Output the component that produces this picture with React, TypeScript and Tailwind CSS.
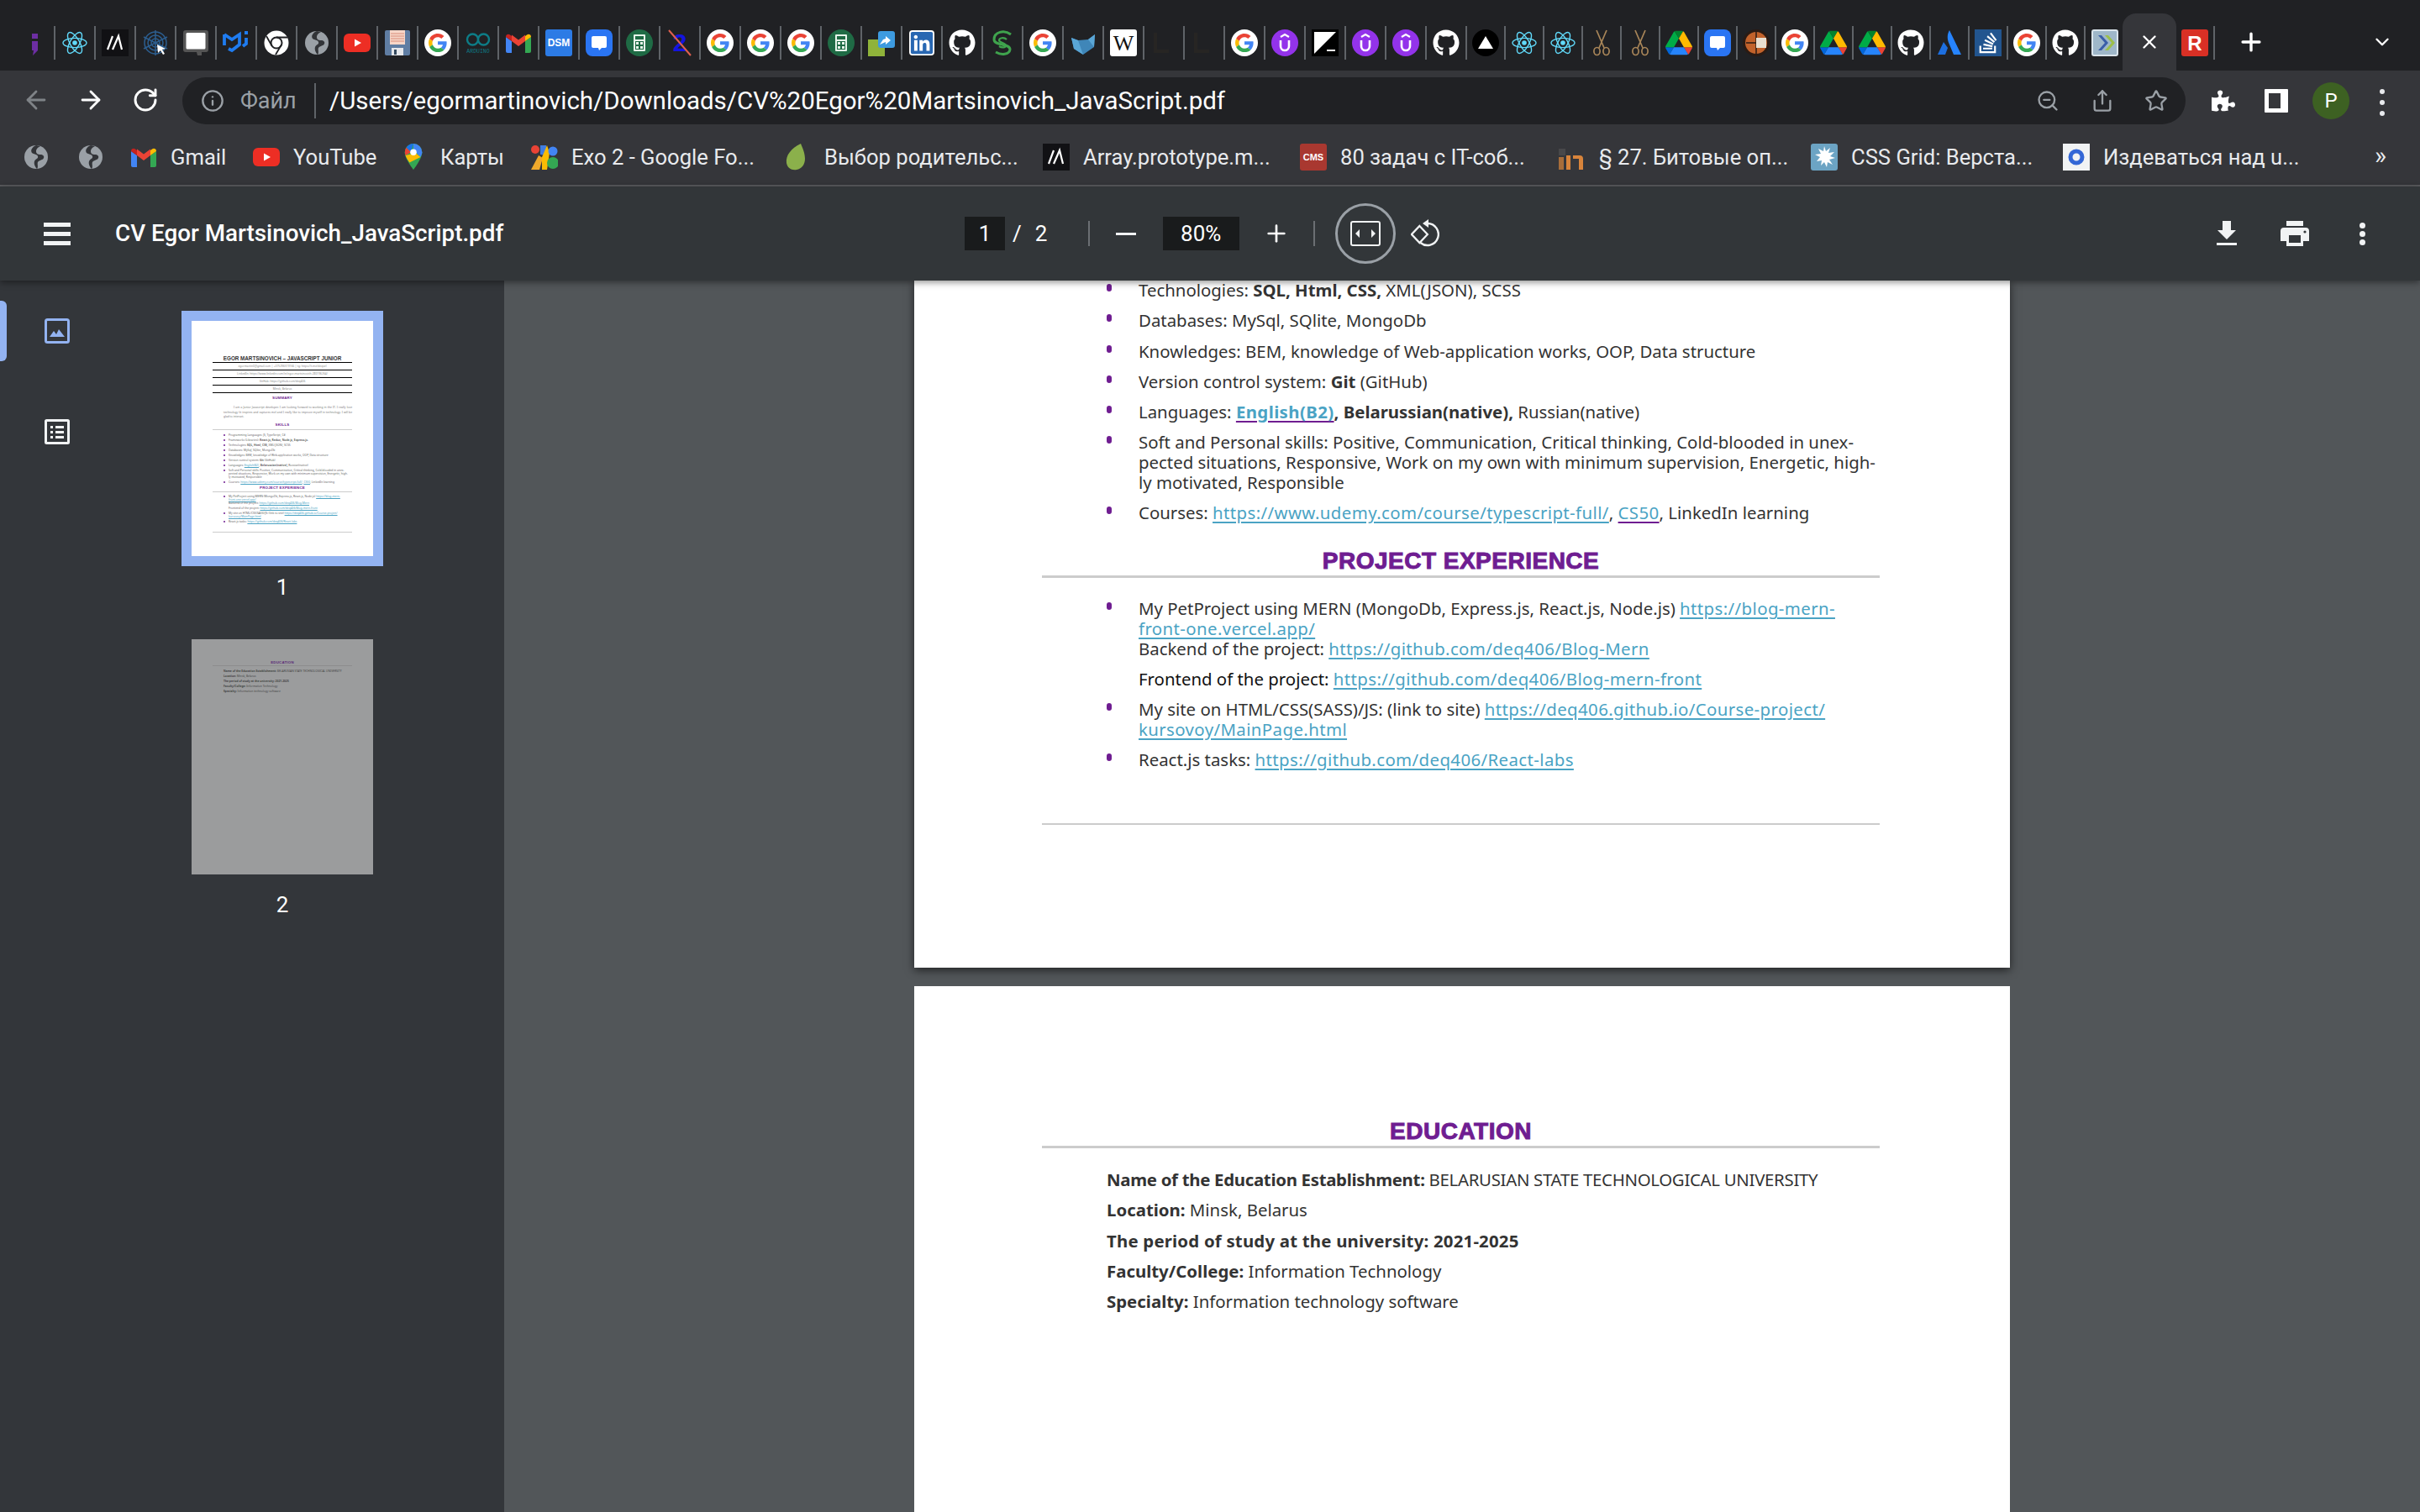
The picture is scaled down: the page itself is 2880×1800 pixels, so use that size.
import React from 'react';
import { FaGithub, FaLinkedin, FaStackOverflow, FaPuzzlePiece } from 'react-icons/fa';
import { ArrowLeft, ArrowRight, RotateCw, Plus, X, ChevronDown, Info, ZoomOut, Share, Star } from 'lucide-react';

/* ---------- favicons ---------- */
const Svg: React.FC<{ children: React.ReactNode; box?: string }> = ({ children, box = '0 0 32 32' }) => (
  <svg viewBox={box} className="w-8 h-8 block">{children}</svg>
);

const Google = () => (
  <Svg box="0 0 48 48">
    <ellipse cx="24" cy="24" rx="24" ry="24" fill="#fff" />
    <g transform="translate(7.5 7.5) scale(.69)">
      <path fill="#EA4335" d="M24 9.5c3.54 0 6.71 1.22 9.21 3.6l6.85-6.85C35.9 2.38 30.47 0 24 0 14.62 0 6.51 5.38 2.56 13.22l7.98 6.19C12.43 13.72 17.74 9.5 24 9.5z" />
      <path fill="#4285F4" d="M46.98 24.55c0-1.57-.15-3.09-.38-4.55H24v9.02h12.94c-.58 2.96-2.26 5.48-4.78 7.18l7.73 6c4.51-4.18 7.09-10.36 7.09-17.65z" />
      <path fill="#FBBC05" d="M10.53 28.59c-.48-1.45-.76-2.99-.76-4.59s.27-3.14.76-4.59l-7.98-6.19C.92 16.46 0 20.12 0 24c0 3.88.92 7.54 2.56 10.78l7.97-6.19z" />
      <path fill="#34A853" d="M24 48c6.48 0 11.93-2.13 15.89-5.81l-7.73-6c-2.15 1.45-4.92 2.3-8.16 2.3-6.26 0-11.57-4.22-13.47-9.91l-7.98 6.19C6.51 42.62 14.62 48 24 48z" />
    </g>
  </Svg>
);

const ReactLogo = () => (
  <Svg>
    <g fill="none" stroke="#61dafb" strokeWidth="1.4">
      <ellipse cx="16" cy="16" rx="14" ry="5.6" />
      <ellipse cx="16" cy="16" rx="14" ry="5.6" transform="rotate(60 16 16)" />
      <ellipse cx="16" cy="16" rx="14" ry="5.6" transform="rotate(120 16 16)" />
    </g>
    <circle cx="16" cy="16" r="2.8" fill="#61dafb" />
  </Svg>
);

const Globe = () => (
  <Svg>
    <circle cx="16" cy="16" r="14" fill="#9aa0a6" />
    <path d="M16 2c-5 2-7 6-5 9 2 2 6 1 7 4 1 3-3 3-4 6-1 3 1 7 3 9 2-2 0-6 1-8 2-3 6-2 7-5 1-2-1-4-4-4-3 0-5-1-5-4 0-3 3-5 5-6z" fill="#202124" opacity=".85" />
  </Svg>
);

const YouTube = () => (
  <Svg>
    <rect x="0" y="5" width="32" height="22" rx="6" fill="#ed2e24" />
    <path d="M13 11.5 21 16l-8 4.5z" fill="#fff" />
  </Svg>
);

const Gmail = () => (
  <Svg>
    <path d="M1 9v17a2 2 0 0 0 2 2h5V14z" fill="#4285f4" />
    <path d="M31 9v17a2 2 0 0 1-2 2h-5V14z" fill="#34a853" />
    <path d="M8 14 16 20 24 14V6.5l-8 6-8-6z" fill="#ea4335" />
    <path d="M1 9c0-3 3-4 5-2.500L8 8v6z" fill="#c5221f" />
    <path d="M31 9c0-3-3-4-5-2.500L24 8v6z" fill="#fbbc04" />
  </Svg>
);

const Drive = () => (
  <Svg box="0 0 87.3 78">
    <path d="m6.6 66.85 3.85 6.65c.8 1.4 1.95 2.5 3.3 3.3l13.75-23.8h-27.5c0 1.55.4 3.1 1.2 4.5z" fill="#0066da" />
    <path d="m43.65 25-13.75-23.8c-1.35.8-2.5 1.9-3.3 3.3l-25.4 44a9.06 9.06 0 0 0 -1.2 4.5h27.5z" fill="#00ac47" />
    <path d="m73.55 76.8c1.35-.8 2.5-1.9 3.3-3.3l1.6-2.75 7.65-13.25c.8-1.4 1.2-2.95 1.2-4.5h-27.502l5.852 11.5z" fill="#ea4335" />
    <path d="m43.65 25 13.75-23.8c-1.35-.8-2.9-1.2-4.5-1.2h-18.5c-1.6 0-3.15.45-4.5 1.2z" fill="#00832d" />
    <path d="m59.8 53h-32.3l-13.75 23.8c1.35.8 2.9 1.2 4.5 1.2h50.8c1.6 0 3.15-.45 4.5-1.2z" fill="#2684fc" />
    <path d="m73.4 26.5-12.7-22c-.8-1.4-1.95-2.5-3.3-3.3l-13.75 23.8 16.15 28h27.45c0-1.55-.4-3.1-1.2-4.5z" fill="#ffba00" />
  </Svg>
);

const Chat = () => (
  <Svg>
    <rect width="32" height="32" rx="8" fill="#2a75f3" />
    <path d="M9 8h14a2 2 0 0 1 2 2v10a2 2 0 0 1-2 2h-4l-3 3-1-3H9a2 2 0 0 1-2-2V10a2 2 0 0 1 2-2z" fill="#fff" />
  </Svg>
);

const Sheets = () => (
  <Svg>
    <circle cx="16" cy="16" r="16" fill="#1f6b45" />
    <rect x="9" y="6" width="14" height="20" rx="1" fill="#e6f4ea" />
    <path d="M11 14h10v10H11z M11 8h10v4H11z" fill="#1f6b45" />
    <path d="M12 15h3v3h-3zM17 15h3v3h-3zM12 20h3v3h-3zM17 20h3v3h-3z" fill="#e6f4ea" />
  </Svg>
);

const Udemy = () => (
  <Svg>
    <circle cx="16" cy="16" r="16" fill="#9333ea" />
    <path d="M11 9l5-3 5 3" fill="none" stroke="#fff" strokeWidth="2.2" />
    <path d="M11 13v7a5 5 0 0 0 10 0v-7" fill="none" stroke="#fff" strokeWidth="2.6" />
  </Svg>
);

const Github = () => <FaGithub className="w-8 h-8 text-white" />;

const Chrome = () => (
  <Svg>
    <circle cx="16" cy="16" r="14.500" fill="#fff" />
    <circle cx="16" cy="16" r="6.500" fill="none" stroke="#202124" strokeWidth="2" />
    <path d="M16 9.500h13M10.500 19.500 4 8M21.500 19 15 30" stroke="#202124" strokeWidth="1.800" />
  </Svg>
);

const Scissors = () => (
  <Svg>
    <g fill="none" stroke="#a98659" strokeWidth="1.700">
      <path d="M10 1l9 21M22 1l-9 21" />
      <ellipse cx="10.500" cy="26" rx="3.600" ry="4.500" />
      <ellipse cx="21.500" cy="26" rx="3.600" ry="4.500" />
    </g>
  </Svg>
);

const Letter: React.FC<{ t: string; size: number; fill: string; color?: string; serif?: boolean }> = ({ t, size, fill, color = '#fff', serif }) => (
  <Svg>
    <rect width="32" height="32" rx="3" fill={fill} />
    <text x="16" y="16" dy=".36em" textAnchor="middle" fontSize={size} fontWeight={serif ? 400 : 700} fill={color} fontFamily={serif ? 'Liberation Serif, serif' : 'Liberation Sans, sans-serif'}>{t}</text>
  </Svg>
);

const Jspell = () => (
  <Svg>
    <rect x="13" y="5" width="7" height="6" fill="#6d2ea3" />
    <path d="M13 14h7v11l-6 6 1-6h-2z" fill="#6d2ea3" />
  </Svg>
);
const Mdn = () => (
  <Svg>
    <rect width="32" height="32" fill="#111114" />
    <path d="M7 24 13 8M13 24 20 8 24 24" fill="none" stroke="#fff" strokeWidth="2.200" />
  </Svg>
);
const Spider = () => (
  <Svg>
    <g fill="none" stroke="#2c5e8f" strokeWidth="1.500">
      <path d="M16 1v30M2 9l28 14M30 9 2 23" />
      <circle cx="16" cy="16" r="5" />
      <circle cx="16" cy="16" r="9" />
      <circle cx="16" cy="16" r="13" />
    </g>
    <path d="M18 18l10 5-4 1 3 5-2 1-3-5-3 3z" fill="#fff" />
  </Svg>
);
const Notice = () => (
  <Svg>
    <path d="M4 1h24a3 3 0 0 1 3 3v20a3 3 0 0 1-3 3h-5v4h-5l-1-4H4a3 3 0 0 1-3-3V4a3 3 0 0 1 3-3z" fill="#555" />
    <path d="M6 4h20a1.500 1.500 0 0 1 1.500 1.500V22a1.500 1.500 0 0 1-1.500 1.500H6A1.500 1.500 0 0 1 4.500 22V5.500A1.500 1.500 0 0 1 6 4z" fill="#fff" />
  </Svg>
);
const Mui = () => (
  <Svg>
    <path d="M2 6V19M2 6 11 12 20 6V18L11 25 7 23M28 10V17L24 20" fill="none" stroke="#1f7cf0" strokeWidth="3.800" />
    <rect x="26" y="2" width="4" height="4" fill="#1f7cf0" />
  </Svg>
);
const Floppy = () => (
  <Svg>
    <rect x="1" y="1" width="30" height="30" rx="2" fill="#5f7da3" />
    <rect x="7" y="1" width="18" height="17" fill="#f6d6c8" />
    <path d="M8 5h16M8 8h16M8 11h16M8 14h16" stroke="#d98c78" strokeWidth="1" />
    <rect x="9" y="22" width="14" height="9" fill="#e5e7eb" />
    <rect x="12" y="24" width="3" height="6" fill="#34495e" />
  </Svg>
);
const Arduino = () => (
  <Svg>
    <g fill="none" stroke="#0d7c86" strokeWidth="2.400">
      <circle cx="9.500" cy="12" r="6.500" />
      <circle cx="22.500" cy="12" r="6.500" />
    </g>
    <text x="16" y="28" textAnchor="middle" fontSize="6.500" fill="#0d7c86" fontFamily="Liberation Mono, monospace">ARDUINO</text>
  </Svg>
);
const XTwo = () => (
  <Svg>
    <text x="16" y="26" textAnchor="middle" fontSize="30" fontWeight="700" fill="#1414e0" fontFamily="Liberation Sans, sans-serif">2</text>
    <path d="M3 1l26 30" stroke="#e0604f" strokeWidth="2" />
  </Svg>
);
const Squoosh = () => (
  <Svg>
    <rect x="0" y="12" width="20" height="20" fill="#8fb33a" />
    <rect x="12" y="2" width="20" height="20" rx="3" fill="#3d9be0" />
    <path d="M14 18l4-6 3-1v-3l6 5-6 5v-3z" fill="#fff" />
  </Svg>
);
const Linked = () => <FaLinkedin className="w-[30px] h-[30px] text-[#2867b2] bg-white rounded-sm" />;
const Swirl = () => (
  <Svg>
    <path d="M26 6C18 0 6 3 6 12c0 8 19 4 19 12-1 6-10 7-17 3" fill="none" stroke="#3fa34d" strokeWidth="3" />
    <path d="M21 12c-3-3-9-2-9 1 0 3 8 3 8 6 0 3-5 3-8 1" fill="none" stroke="#3fa34d" strokeWidth="2.200" />
  </Svg>
);
const Fox = () => (
  <Svg>
    <path d="M2 10l8 3L22 12l8-6-1 15-13 9-11-7z" fill="#3f86b8" />
    <path d="M2 10l8 3 6 17-11-7zM22 12l8-6-1 15z" fill="#5aa6d6" />
  </Svg>
);
const Terminal = () => (
  <Svg>
    <rect width="32" height="32" fill="#000" />
    <path d="M3 3h26L3 29z" fill="#fff" />
    <rect x="18" y="24" width="10" height="2" fill="#fff" />
  </Svg>
);
const Vercel = () => (
  <Svg>
    <circle cx="16" cy="16" r="16" fill="#000" />
    <path d="M16 8l9 15H7z" fill="#fff" />
  </Svg>
);
const Ball = () => (
  <Svg>
    <circle cx="16" cy="16" r="16" fill="#2a1b14" />
    <circle cx="16" cy="16" r="13" fill="#c2622b" />
    <path d="M4 16h24M16 3v26" stroke="#2a1b14" strokeWidth="1.500" />
    <rect x="16" y="10" width="12" height="12" fill="#e9dfd0" />
  </Svg>
);
const Atlassian = () => (
  <Svg>
    <path d="M16 1c-3 5-3 11 0 17l5 12h9z" fill="#2684ff" />
    <path d="M9 15 2 30h9l3-8z" fill="#1d6fe0" />
  </Svg>
);
const Stack = () => (
  <div className="w-8 h-8 bg-[#22558f] flex items-center justify-center">
    <FaStackOverflow className="w-7 h-7 text-white" />
  </div>
);
const Arrows = () => (
  <Svg>
    <rect x="1" y="1" width="30" height="30" rx="2" fill="#9fb7c9" stroke="#dbe5ec" strokeWidth="2" />
    <path d="M8 7l8 9-8 9h4l8-9-8-9z" fill="#3b5ea8" />
    <path d="M16 7l8 9-8 9h4l8-9-8-9z" fill="#9cbf4a" />
  </Svg>
);
const Blank = () => (
  <Svg>
    <path d="M4 4h4v20h14v4H4z" fill="#272523" />
  </Svg>
);

const Pin = () => (
  <Svg box="0 0 24 34">
    <path d="M12 0A11 11 0 0 0 1 11c0 8 11 22 11 22s11-14 11-22A11 11 0 0 0 12 0z" fill="#34a853" />
    <path d="M12 0a11 11 0 0 1 11 11c0 2-1 4-2 6L12 8z" fill="#4285f4" />
    <path d="M12 0A11 11 0 0 0 3 5l6 6z" fill="#1a73e8" />
    <path d="M3 5a11 11 0 0 0-1 10l7-4z" fill="#ea4335" />
    <path d="M2 15c1 3 3 6 5 9l14-7-6-5z" fill="#fbbc04" />
    <circle cx="12" cy="11" r="4" fill="#fff" />
  </Svg>
);
const Exo = () => (
  <Svg>
    <path d="M0 31 9 14l5 3-4 14z" fill="#f0a92c" />
    <circle cx="5" cy="7" r="5" fill="#ea4335" />
    <path d="M11 2h7v12l-7-1z" fill="#4285f4" opacity=".9" />
    <path d="M13 16l6-14 3 9-3 20h-6z" fill="#fbbc04" />
    <circle cx="26" cy="9" r="5.500" fill="#4285f4" />
    <circle cx="26" cy="23" r="7" fill="#34a853" />
  </Svg>
);
const Leaf = () => (
  <Svg>
    <path d="M20 0C8 6 2 14 3 23c1 6 6 9 12 8 6-1 10-6 10-13 0-7-3-13-5-18z" fill="#8bb04b" />
  </Svg>
);
const Habr = () => (
  <Svg>
    <rect x="0" y="6" width="8" height="8" fill="#555" opacity=".6" />
    <path d="M9 14h5v17H9zM17 14h8a4 4 0 0 1 4 4v13h-5V18h-7z" fill="#d8843b" />
    <path d="M0 16h6v15H0z" fill="#d8843b" opacity=".7" />
  </Svg>
);
const Splat = () => (
  <Svg>
    <rect width="32" height="32" rx="3" fill="#6ca4c4" />
    <path d="M16 3l2 6 5-4-2 6 7-1-5 5 6 2-7 2 4 6-6-3-1 6-3-6-4 4 1-6-6 1 4-5-6-3 7-1-3-6 6 3z" fill="#fff" />
  </Svg>
);
const RingIcon = () => (
  <Svg>
    <rect width="32" height="32" fill="#f1f3f4" />
    <circle cx="16" cy="16" r="7" fill="none" stroke="#3367d6" strokeWidth="5" />
  </Svg>
);

/* ---------- tab strip ---------- */
const wideTabs = [
  Jspell, ReactLogo, Mdn, Spider, Notice, Mui, Chrome, Globe, YouTube, Floppy, Google, Arduino, Gmail,
  () => <Letter t="DSM" size={12} fill="#2c7be5" />, Chat, Sheets, XTwo, Google, Google, Google, Sheets, Squoosh, Linked, Github, Swirl, Google, Fox,
  () => <Letter t="W" size={26} fill="#fff" color="#111" serif />, Blank, Blank, Google, Udemy, Terminal, Udemy, Udemy, Github,
];
const narrowTabs = [
  Vercel, ReactLogo, ReactLogo, Scissors, Scissors, Drive, Chat, Ball, Google, Drive, Drive, Github, Atlassian, Stack, Google, Github, Arrows,
];

const TabStrip = () => (
  <div className="h-[84px] bg-[#202124] flex items-end pl-[18px] relative shrink-0">
    <div className="flex h-[68px] items-start">
      {wideTabs.map((Icon, i) => (
        <div key={i} className="w-12 h-[40px] mt-[15px] flex items-center justify-center border-r-2 border-[#5f6368] pr-[1px]">
          <Icon />
        </div>
      ))}
      {narrowTabs.map((Icon, i) => (
        <div key={i} className={`w-[46px] h-[40px] mt-[15px] flex items-center justify-center pr-[1px] ${i === narrowTabs.length - 1 ? '' : 'border-r-2 border-[#5f6368]'}`}>
          <Icon />
        </div>
      ))}
    </div>
    <div className="w-16 h-[68px] bg-[#35363a] rounded-t-[16px] flex items-center justify-center -ml-[2px]">
      <X className="w-[26px] h-[26px] text-white" strokeWidth={2.2} />
    </div>
    <div className="w-[46px] h-[40px] mb-[13px] flex items-center justify-center border-r-2 border-[#5f6368]">
      <Letter t="R" size={24} fill="#d93025" />
    </div>
    <Plus className="w-[34px] h-[34px] text-white mb-[17px] ml-[26px]" strokeWidth={2.4} />
    <ChevronDown className="w-[26px] h-[26px] text-white mb-[21px] ml-[126px]" strokeWidth={2.2} />
  </div>
);

/* ---------- toolbar ---------- */
const Toolbar = () => (
  <div className="h-16 bg-[#35363a] flex items-start shrink-0 pt-2 font-['Roboto',sans-serif]">
    <ArrowLeft className="w-[34px] h-[34px] text-[#7f8387] ml-[26px] mt-[10px]" strokeWidth={2} />
    <ArrowRight className="w-[34px] h-[34px] text-white ml-[31px] mt-[10px]" strokeWidth={2} />
    <RotateCw className="w-[32px] h-[32px] text-white ml-[32px] mt-[11px]" strokeWidth={2.2} />
    <div className="ml-[28px] w-[2384px] h-14 rounded-full bg-[#202124] flex items-center">
      <Info className="w-7 h-7 text-[#9aa0a6] ml-[22px]" strokeWidth={2} />
      <span className="text-[27px] text-[#9aa0a6] ml-[19px] w-[90px] border-r-2 border-[#5f6368] leading-[42px]">Файл</span>
      <span className="text-[29.500px] text-white ml-[16px] whitespace-nowrap">/Users/egormartinovich/Downloads/CV%20Egor%20Martsinovich_JavaScript.pdf</span>
      <ZoomOut className="w-7 h-7 text-[#9aa0a6] ml-auto" strokeWidth={2} />
      <Share className="w-7 h-7 text-[#9aa0a6] ml-[37px]" strokeWidth={2} />
      <Star className="w-7 h-7 text-[#9aa0a6] ml-[36px] mr-[21px]" strokeWidth={2} />
    </div>
    <FaPuzzlePiece className="w-7 h-7 text-white ml-[31px] mt-[14px]" />
    <div className="w-7 h-7 border-white border-[5px] border-r-[9px] ml-[35px] mt-[14px] rounded-[1px]" />
    <div className="w-[44px] h-[44px] rounded-full bg-[#3d6122] text-white text-[24px] flex items-center justify-center ml-[29px] mt-[6px]">P</div>
    <div className="flex flex-col gap-[7px] ml-[36px] mt-[14px]">
      <span className="w-[6px] h-[6px] rounded-full bg-[#e8eaed]" />
      <span className="w-[6px] h-[6px] rounded-full bg-[#e8eaed]" />
      <span className="w-[6px] h-[6px] rounded-full bg-[#e8eaed]" />
    </div>
  </div>
);

/* ---------- bookmarks ---------- */
const bookmarks: { icon: React.FC; label: string; width: string }[] = [
  { icon: Gmail, label: 'Gmail', width: 'w-[146px]' },
  { icon: YouTube, label: 'YouTube', width: 'w-[175px]' },
  { icon: Pin, label: 'Карты', width: 'w-[156px]' },
  { icon: Exo, label: 'Exo 2 - Google Fo...', width: 'w-[301px]' },
  { icon: Leaf, label: 'Выбор родительс...', width: 'w-[308px]' },
  { icon: Mdn, label: 'Array.prototype.m...', width: 'w-[306px]' },
  { icon: () => <Letter t="CMS" size={11} fill="#a93830" />, label: '80 задач с IT-соб...', width: 'w-[308px]' },
  { icon: Habr, label: '§ 27. Битовые оп...', width: 'w-[300px]' },
  { icon: Splat, label: 'CSS Grid: Верста...', width: 'w-[300px]' },
  { icon: RingIcon, label: 'Издеваться над u...', width: 'w-[300px]' },
];

const Bookmarks = () => (
  <div className="h-[74px] bg-[#35363a] border-b-2 border-[#5b5c5f] flex items-center shrink-0 font-['Roboto',sans-serif] text-[25.600px] text-[#e8eaed] pt-[6px]">
    <div className="w-[32px] ml-[27px] shrink-0"><Globe /></div>
    <div className="w-[32px] ml-[33px] mr-[31px] shrink-0"><Globe /></div>
    {bookmarks.map(b => (
      <div key={b.label} className={`flex items-center gap-[16px] whitespace-nowrap shrink-0 ${b.width}`}>
        <b.icon />
        <span>{b.label}</span>
      </div>
    ))}
    <span className="ml-[71px] text-[30px] leading-none -mt-[4px]">»</span>
  </div>
);

/* ---------- pdf toolbar ---------- */
const PdfToolbar = () => (
  <div className="h-[112px] bg-[#323639] flex items-center shrink-0 relative z-10 shadow-[0_2px_8px_rgba(0,0,0,0.45)] font-['Roboto',sans-serif] text-white">
    <div className="flex flex-col gap-[6px] ml-[52px]">
      <span className="w-8 h-[5px] bg-[#f1f3f4]" />
      <span className="w-8 h-[5px] bg-[#f1f3f4]" />
      <span className="w-8 h-[5px] bg-[#f1f3f4]" />
    </div>
    <span className="ml-[53px] text-[27.800px] font-medium w-[1011px] whitespace-nowrap">CV Egor Martsinovich_JavaScript.pdf</span>
    <span className="w-12 h-10 bg-[#191b1c] flex items-center justify-center text-[26px]">1</span>
    <span className="text-[26px] ml-[9px]">/</span>
    <span className="text-[26px] ml-[16px] w-[63px]">2</span>
    <span className="w-[2px] h-[30px] bg-[#6b6f73]" />
    <span className="w-6 h-[3px] bg-[#f1f3f4] ml-[31px]" />
    <span className="w-[91px] h-10 bg-[#191b1c] flex items-center justify-center text-[26px] ml-[32px]">80%</span>
    <Plus className="w-[32px] h-[32px] ml-[28px]" strokeWidth={2} />
    <span className="w-[2px] h-[30px] bg-[#6b6f73] ml-[28px]" />
    <div className="w-[72px] h-[72px] rounded-full border-[3px] border-[#9aa0a6] flex items-center justify-center ml-[24px]">
      <svg viewBox="0 0 36 30" className="w-9 h-[30px]">
        <rect x="1" y="1" width="34" height="28" rx="2" fill="none" stroke="#f1f3f4" strokeWidth="2" />
        <path d="M11 10v10l-5-5zM25 10v10l5-5z" fill="#f1f3f4" />
      </svg>
    </div>
    <svg viewBox="0 0 34 36" className="w-[34px] h-9 ml-[18px]">
      <path d="M20 6A13 13 0 1 1 11.500 29" fill="none" stroke="#f1f3f4" strokeWidth="2.400" />
      <path d="M21 1v10l-7-5z" fill="#f1f3f4" />
      <path d="M10 9 20 19 10 29 0 19z" transform="translate(1 0) scale(.94 1)" fill="none" stroke="#f1f3f4" strokeWidth="2.400" />
    </svg>
    <svg viewBox="0 0 24 30" className="w-6 h-[30px] ml-auto">
      <path d="M7 0h10v11h6L12 22 1 11h6zM0 26h24v3H0z" fill="#f1f3f4" />
    </svg>
    <svg viewBox="0 0 34 30" className="w-[34px] h-[30px] ml-[52px]">
      <path d="M7 0h20v6H7zM4 8h26a4 4 0 0 1 4 4v12h-7v6H7v-6H0V12a4 4 0 0 1 4-4z" fill="#f1f3f4" />
      <path d="M10 17h14v9H10z" fill="#323639" />
      <circle cx="29" cy="13" r="1.600" fill="#323639" />
    </svg>
    <div className="flex flex-col gap-[3px] ml-[60px] mr-[65px]">
      <span className="w-[7px] h-[7px] rounded-full bg-[#f1f3f4]" />
      <span className="w-[7px] h-[7px] rounded-full bg-[#f1f3f4]" />
      <span className="w-[7px] h-[7px] rounded-full bg-[#f1f3f4]" />
    </div>
  </div>
);

/* ---------- thumbnails ---------- */
const ThumbItem: React.FC<{ children: React.ReactNode; rowClass: string }> = ({ children, rowClass }) => (
  <div className={`flex items-center pl-[13px] whitespace-nowrap ${rowClass}`}>
    <span className="w-[2px] h-[2px] rounded-full bg-[#6f1d91] mr-[4px] shrink-0" />
    <span>{children}</span>
  </div>
);
const ThumbHead: React.FC<{ children: React.ReactNode; rowClass: string }> = ({ children, rowClass }) => (
  <div className={`flex items-center justify-center font-bold text-[#6f1d91] text-[4.400px] tracking-[0.2px] font-['Liberation_Sans',sans-serif] ${rowClass}`}>{children}</div>
);
const TA: React.FC<{ children: React.ReactNode }> = ({ children }) => <span className="text-[#4aa3c4] underline">{children}</span>;

const ThumbOne = () => (
  <div className="w-[216px] h-[280px] bg-white pt-[41px] px-[25px] font-['Noto_Sans',sans-serif] text-[3.300px] text-[#666] leading-none overflow-hidden">
    <div className="h-[9px] border-b border-black flex items-center justify-center font-bold text-[6.300px] text-[#333] whitespace-nowrap font-['Liberation_Sans',sans-serif]">EGOR MARTSINOVICH – JAVASCRIPT JUNIOR</div>
    <div className="h-[9px] border-b border-black flex items-center justify-center whitespace-nowrap text-[#888]">egormartin0@gmail.com | +375296519166 | tg: https://t.me/deqsel</div>
    <div className="h-[9px] border-b border-black flex items-center justify-center whitespace-nowrap text-[#888]">LinkedIn: https://www.linkedin.com/in/egor-martsinovich-280196264/</div>
    <div className="h-[9px] border-b border-black flex items-center justify-center whitespace-nowrap text-[#888]">GitHub: https://github.com/deq406</div>
    <div className="h-[9px] border-b border-black flex items-center justify-center whitespace-nowrap text-[#888]">Minsk, Belarus</div>
    <ThumbHead rowClass="h-[13px]">SUMMARY</ThumbHead>
    <div className="pl-[13px] text-[#777] leading-[5.500px] mt-[1px] text-justify [text-indent:12px]">I am a Junior Javascript developer. I am looking forward to working in the IT. I really love technology (it inspires and captures me) and I really like to improve myself in technology. I will be glad to interact.</div>
    <ThumbHead rowClass="h-[6px] mt-[5px] mb-[1px]">SKILLS</ThumbHead>
    <div className="h-[1px] bg-[#ccc] mb-[3px]" />
    <ThumbItem rowClass="h-[6px]">Programming Languages: JS, TypeScript, C#</ThumbItem>
    <ThumbItem rowClass="h-[6px]">Frameworks (Libraries): <b>React.js, Redux, Node.js, Express.js.</b></ThumbItem>
    <ThumbItem rowClass="h-[6px]">Technologies: <b>SQL, Html, CSS,</b> XML(JSON), SCSS</ThumbItem>
    <ThumbItem rowClass="h-[6px]">Databases: MySql, SQlite, MongoDb</ThumbItem>
    <ThumbItem rowClass="h-[6px]">Knowledges: BEM, knowledge of Web-application works, OOP, Data structure</ThumbItem>
    <ThumbItem rowClass="h-[6px]">Version control system: <b>Git</b> (GitHub)</ThumbItem>
    <ThumbItem rowClass="h-[6px]">Languages: <TA>English(B2)</TA>, <b>Belarussian(native),</b> Russian(native)</ThumbItem>
    <ThumbItem rowClass="h-[4px] mt-[1px]">Soft and Personal skills: Positive, Communication, Critical thinking, Cold-blooded in unex-</ThumbItem>
    <div className="h-[4px] pl-[19px] flex items-center whitespace-nowrap">pected situations, Responsive, Work on my own with minimum supervision, Energetic, high-</div>
    <div className="h-[4px] pl-[19px] flex items-center whitespace-nowrap">ly motivated, Responsible</div>
    <ThumbItem rowClass="h-[6px] mt-[1px]">Courses: <TA>https://www.udemy.com/course/typescript-full/</TA>, <TA>CS50</TA>, LinkedIn learning</ThumbItem>
    <ThumbHead rowClass="h-[6px] mt-[2px]">PROJECT EXPERIENCE</ThumbHead>
    <div className="h-[1px] bg-[#ccc] mb-[3px]" />
    <ThumbItem rowClass="h-[4px]">My PetProject using MERN (MongoDb, Express.js, React.js, Node.js) <TA>https://blog-mern-</TA></ThumbItem>
    <div className="h-[4px] pl-[19px] flex items-center whitespace-nowrap"><TA>front-one.vercel.app/</TA></div>
    <div className="h-[4px] pl-[19px] flex items-center whitespace-nowrap"><span>Backend of the project: <TA>https://github.com/deq406/Blog-Mern</TA></span></div>
    <div className="h-[6px] mt-[1px] pl-[19px] flex items-center whitespace-nowrap"><span>Frontend of the project: <TA>https://github.com/deq406/Blog-mern-front</TA></span></div>
    <ThumbItem rowClass="h-[4px] mt-[1px]">My site on HTML/CSS(SASS)/JS: (link to site) <TA>https://deq406.github.io/Course-project/</TA></ThumbItem>
    <div className="h-[4px] pl-[19px] flex items-center whitespace-nowrap"><TA>kursovoy/MainPage.html</TA></div>
    <ThumbItem rowClass="h-[6px] mt-[1px]">React.js tasks: <TA>https://github.com/deq406/React-labs</TA></ThumbItem>
    <div className="h-[1px] bg-[#ccc] mt-[9px]" />
  </div>
);

const ThumbTwo = () => (
  <div className="w-[216px] h-[280px] bg-[#9b9c9d] pt-[25px] px-[25px] font-['Noto_Sans',sans-serif] text-[3.300px] text-[#444] leading-none overflow-hidden">
    <ThumbHead rowClass="h-[6px] !text-[#5b2a78]">EDUCATION</ThumbHead>
    <div className="h-[1px] bg-[#8c8c8d] mb-[3px]" />
    <div className="pl-[13px] flex flex-col whitespace-nowrap">
      <div className="h-[6px] flex items-center"><b>Name of the Education Establishment:</b>&nbsp;BELARUSIAN STATE TECHNOLOGICAL UNIVERSITY</div>
      <div className="h-[6px] flex items-center"><b>Location:</b>&nbsp;Minsk, Belarus</div>
      <div className="h-[6px] flex items-center"><b>The period of study at the university: 2021-2025</b></div>
      <div className="h-[6px] flex items-center"><b>Faculty/College:</b>&nbsp;Information Technology</div>
      <div className="h-[6px] flex items-center"><b>Specialty:</b>&nbsp;Information technology software</div>
    </div>
  </div>
);

const Sidebar = () => (
  <aside className="w-[600px] shrink-0 bg-[#33363a] relative font-['Roboto',sans-serif] text-white flex">
    <div className="absolute left-0 top-[24px] w-2 h-[72px] rounded-r-[6px] bg-[#93b3f1]" />
    <div className="w-[136px] shrink-0 flex flex-col items-center pt-[45px] gap-[90px]">
      <svg viewBox="0 0 30 30" className="w-[30px] h-[30px]">
        <rect x="1.500" y="1.500" width="27" height="27" rx="2" fill="none" stroke="#93b3f1" strokeWidth="3" />
        <path d="M6 22l5-7 3 4 3-6 7 9z" fill="#93b3f1" />
      </svg>
      <svg viewBox="0 0 30 30" className="w-[30px] h-[30px]">
        <rect x="1.500" y="1.500" width="27" height="27" rx="1" fill="none" stroke="#f1f3f4" strokeWidth="3" />
        <path d="M7 8h3v3H7zM13 8h10v3H13zM7 14h3v3H7zM13 14h10v3H13zM7 20h3v3H7zM13 20h10v3H13z" fill="#f1f3f4" />
      </svg>
    </div>
    <div className="w-[240px] ml-[80px] flex flex-col items-center pt-[36px]">
      <div className="border-[12px] border-[#93b3f1]"><ThumbOne /></div>
      <span className="text-[26px] leading-[30px] mt-[10px]">1</span>
      <div className="mt-[47px]"><ThumbTwo /></div>
      <span className="text-[26px] leading-[30px] mt-[21px]">2</span>
    </div>
  </aside>
);

/* ---------- pdf pages ---------- */
const A: React.FC<{ children: React.ReactNode; purple?: boolean }> = ({ children, purple }) => (
  <a className={`text-[#4aa3c4] underline underline-offset-[3px] tracking-[0.4px] ${purple ? 'decoration-[#6f1d91]' : 'decoration-[#4aa3c4]'}`}>{children}</a>
);
const Li: React.FC<{ children: React.ReactNode }> = ({ children }) => (
  <li className="flex mb-[12.700px]">
    <span className="w-[6px] h-[9px] rounded-full bg-[#6f1d91] mt-[4px] mr-[32px] shrink-0" />
    <div>{children}</div>
  </li>
);
const Heading: React.FC<{ children: React.ReactNode; className: string }> = ({ children, className }) => (
  <h2 className={`h-[36px] border-b-[3px] border-[#cccccc] text-center font-['Liberation_Sans',sans-serif] font-bold text-[#6f1d91] text-[28px] leading-[32px] [-webkit-text-stroke:1px_#6f1d91] tracking-[0.5px] ${className}`}>{children}</h2>
);

const PdfPages = () => (
  <main className="flex-1 bg-[#525659] flex flex-col items-center">
    <section className="w-[1304px] h-[818px] shrink-0 bg-white pl-[152px] pr-[155px] shadow-[0_3px_10px_rgba(0,0,0,0.6)] font-['Noto_Sans',sans-serif] text-[20.400px] leading-[23.600px] text-[#333] whitespace-nowrap">
      <ul className="pl-[77px]">
        <Li>Technologies: <b>SQL, Html, CSS,</b> XML(JSON), SCSS</Li>
        <Li>Databases: MySql, SQlite, MongoDb</Li>
        <Li>Knowledges: BEM, knowledge of Web-application works, OOP, Data structure</Li>
        <Li>Version control system: <b>Git</b> (GitHub)</Li>
        <Li>Languages: <A purple><b>English(B2)</b></A><b>, Belarussian(native),</b> Russian(native)</Li>
        <Li>
          Soft and Personal skills: Positive, Communication, Critical thinking, Cold-blooded in unex-<br />
          pected situations, Responsive, Work on my own with minimum supervision, Energetic, high-<br />
          ly motivated, Responsible
        </Li>
        <Li>Courses: <A>https://www.udemy.com/course/typescript-full/</A>, <A purple>CS50</A>, LinkedIn learning</Li>
      </ul>
      <Heading className="mt-[30px]">PROJECT EXPERIENCE</Heading>
      <ul className="pl-[77px] mt-[25px]">
        <Li>
          My PetProject using MERN (MongoDb, Express.js, React.js, Node.js) <A>https://blog-mern-</A><br />
          <A>front-one.vercel.app/</A><br />
          Backend of the project: <A>https://github.com/deq406/Blog-Mern</A>
          <div className="mt-[12.700px] text-[#111]">Frontend of the project: <A>https://github.com/deq406/Blog-mern-front</A></div>
        </Li>
        <Li>
          My site on HTML/CSS(SASS)/JS: (link to site) <A>https://deq406.github.io/Course-project/</A><br />
          <A>kursovoy/MainPage.html</A>
        </Li>
        <Li>React.js tasks: <A>https://github.com/deq406/React-labs</A></Li>
      </ul>
      <div className="h-[2px] bg-[#cccccc] mt-[63px]" />
    </section>
    <section className="w-[1304px] shrink-0 flex-1 min-h-[626px] mt-[22px] bg-white pl-[152px] pr-[155px] pt-[157px] font-['Noto_Sans',sans-serif] text-[20.400px] leading-[23.600px] text-[#333] whitespace-nowrap">
      <Heading className="">EDUCATION</Heading>
      <div className="pl-[77px] mt-[26px] flex flex-col gap-[12.700px]">
        <div className="tracking-[-0.3px]"><b>Name of the Education Establishment:</b> BELARUSIAN STATE TECHNOLOGICAL UNIVERSITY</div>
        <div><b>Location:</b> Minsk, Belarus</div>
        <div className="tracking-[0.2px]"><b>The period of study at the university: 2021-2025</b></div>
        <div><b>Faculty/College:</b> Information Technology</div>
        <div><b>Specialty:</b> Information technology software</div>
      </div>
    </section>
  </main>
);

export default function App() {
  return (
    <div className="w-[2880px] h-[1800px] overflow-hidden flex flex-col bg-[#525659]">
      <TabStrip />
      <Toolbar />
      <Bookmarks />
      <PdfToolbar />
      <div className="flex flex-1 min-h-0">
        <Sidebar />
        <PdfPages />
      </div>
    </div>
  );
}
